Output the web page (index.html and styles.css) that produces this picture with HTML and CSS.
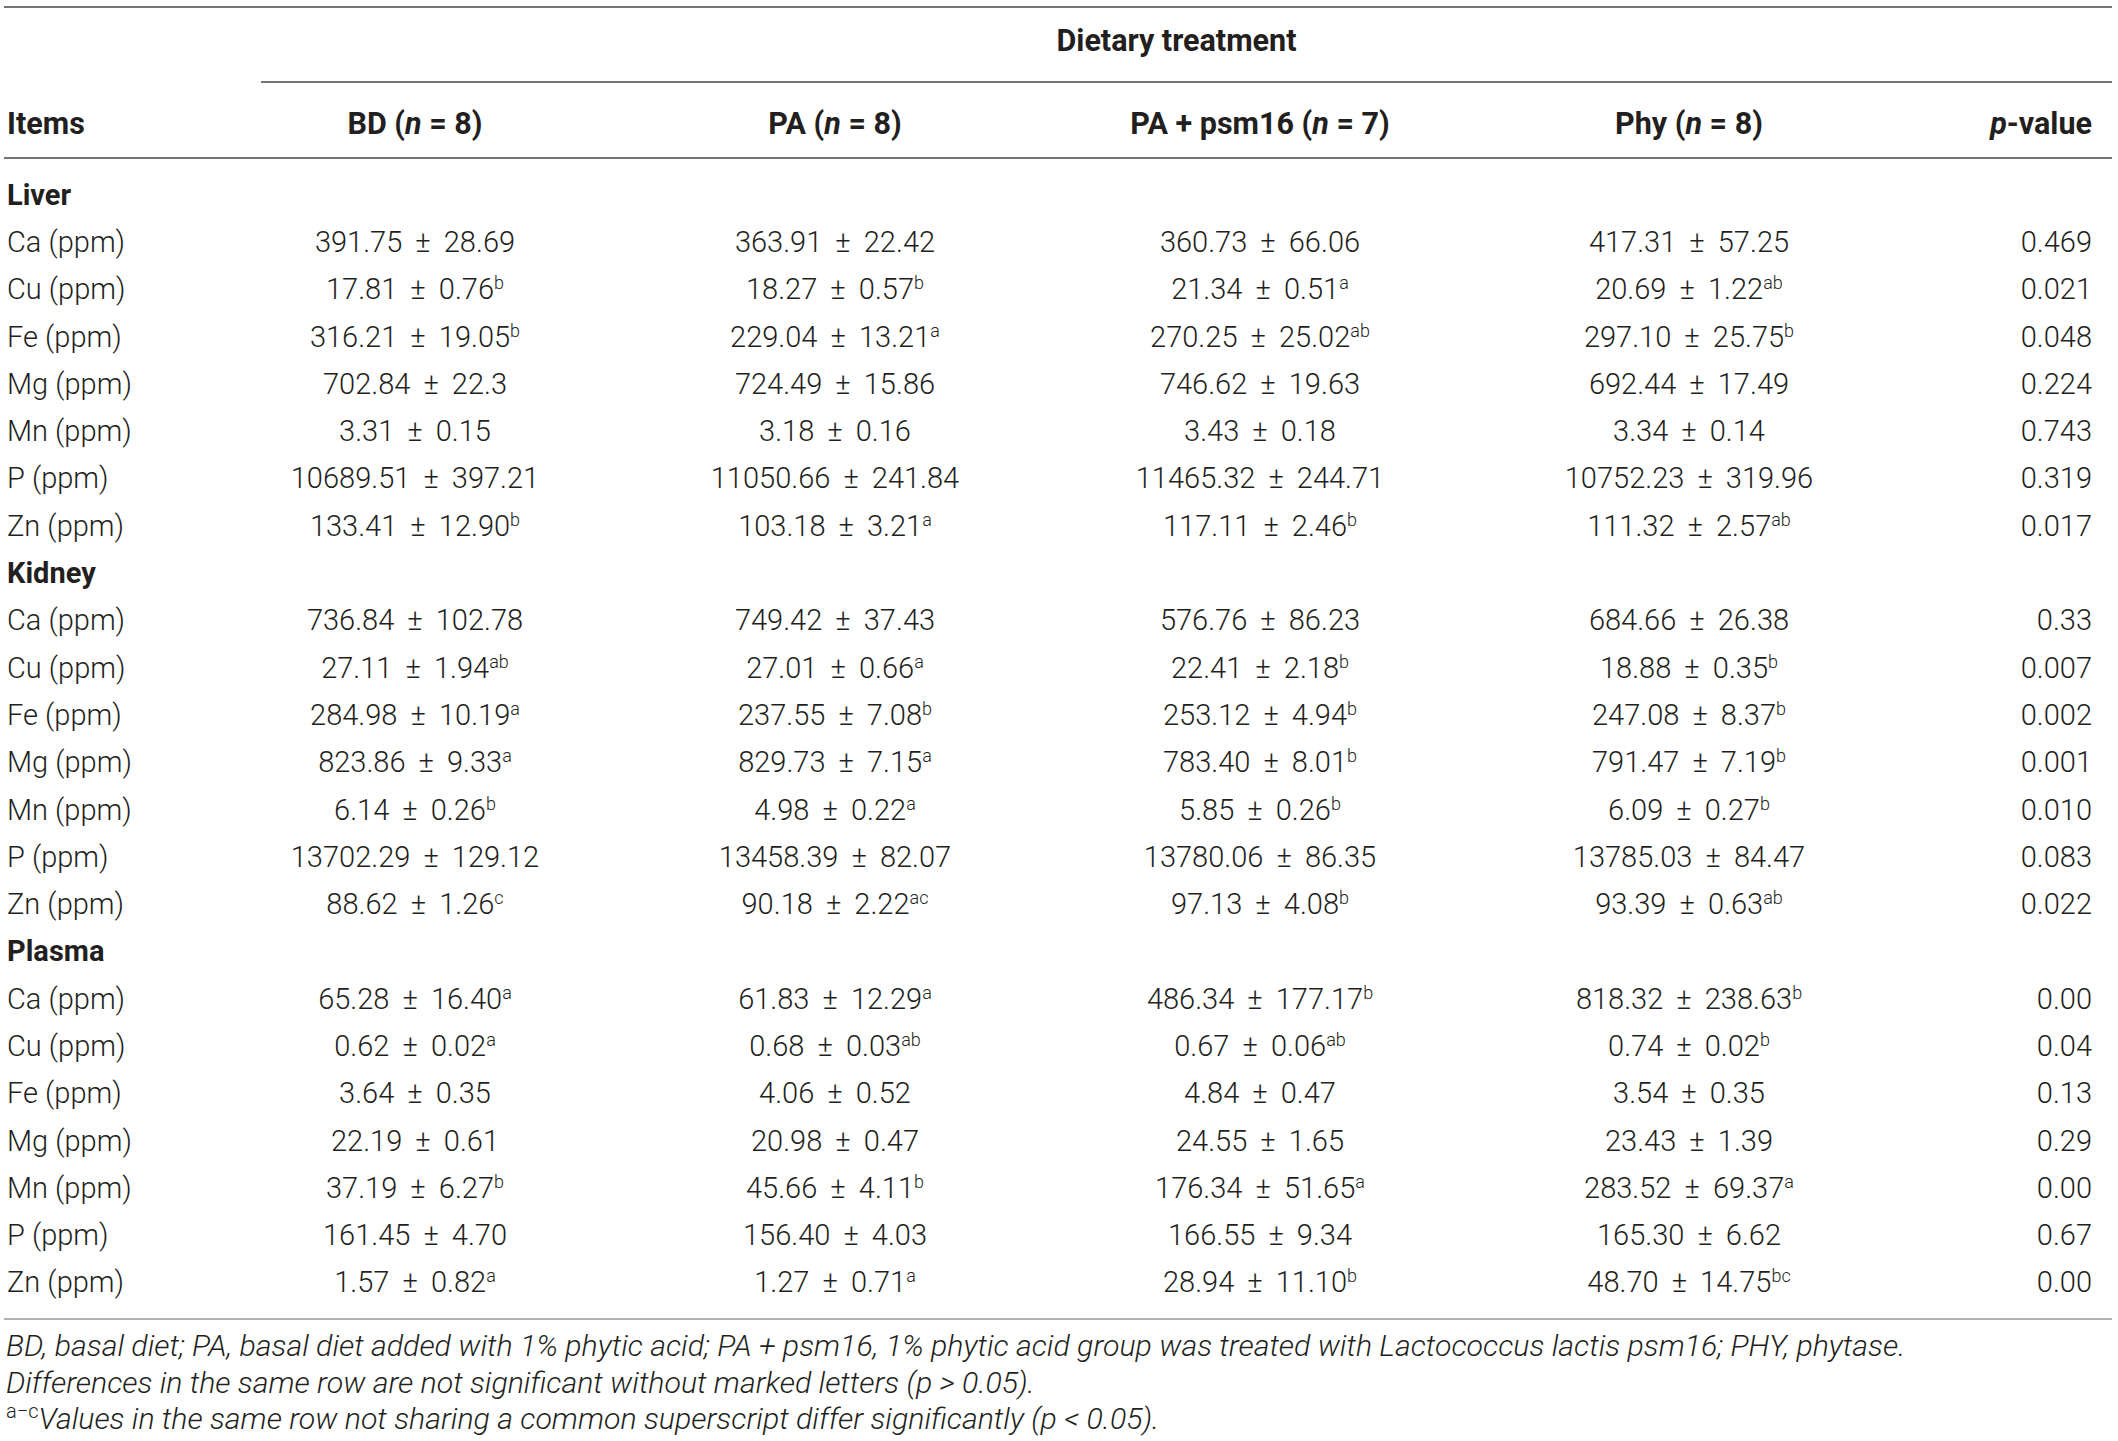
FILE: index.html
```html
<html>
  <head>
    <title>Dietary treatment - mineral content</title>
    <link rel="stylesheet" href="styles.css">
  </head>
  <body>
  <div id="wrapper">
    <div class="tbl">
      <div class="row head-top">
        <div></div>
        <div class="group">Dietary treatment</div>
      </div>
      <div class="row head-cols">
        <div class="left">Items</div>
        <div>BD (<i>n</i> = 8)</div>
        <div>PA (<i>n</i> = 8)</div>
        <div>PA + psm16 (<i>n</i> = 7)</div>
        <div>Phy (<i>n</i> = 8)</div>
        <div class="right"><i>p</i>-value</div>
      </div>
      <div class="body">
        <div class="row section"><div class="label">Liver</div></div>
        <div class="row"><div>Ca (ppm)</div><div>391.75 ± 28.69</div><div>363.91 ± 22.42</div><div>360.73 ± 66.06</div><div>417.31 ± 57.25</div><div>0.469</div></div>
        <div class="row"><div>Cu (ppm)</div><div>17.81 ± 0.76<sup>b</sup></div><div>18.27 ± 0.57<sup>b</sup></div><div>21.34 ± 0.51<sup>a</sup></div><div>20.69 ± 1.22<sup>ab</sup></div><div>0.021</div></div>
        <div class="row"><div>Fe (ppm)</div><div>316.21 ± 19.05<sup>b</sup></div><div>229.04 ± 13.21<sup>a</sup></div><div>270.25 ± 25.02<sup>ab</sup></div><div>297.10 ± 25.75<sup>b</sup></div><div>0.048</div></div>
        <div class="row"><div>Mg (ppm)</div><div>702.84 ± 22.3</div><div>724.49 ± 15.86</div><div>746.62 ± 19.63</div><div>692.44 ± 17.49</div><div>0.224</div></div>
        <div class="row"><div>Mn (ppm)</div><div>3.31 ± 0.15</div><div>3.18 ± 0.16</div><div>3.43 ± 0.18</div><div>3.34 ± 0.14</div><div>0.743</div></div>
        <div class="row"><div>P (ppm)</div><div>10689.51 ± 397.21</div><div>11050.66 ± 241.84</div><div>11465.32 ± 244.71</div><div>10752.23 ± 319.96</div><div>0.319</div></div>
        <div class="row"><div>Zn (ppm)</div><div>133.41 ± 12.90<sup>b</sup></div><div>103.18 ± 3.21<sup>a</sup></div><div>117.11 ± 2.46<sup>b</sup></div><div>111.32 ± 2.57<sup>ab</sup></div><div>0.017</div></div>
        <div class="row section"><div class="label">Kidney</div></div>
        <div class="row"><div>Ca (ppm)</div><div>736.84 ± 102.78</div><div>749.42 ± 37.43</div><div>576.76 ± 86.23</div><div>684.66 ± 26.38</div><div>0.33</div></div>
        <div class="row"><div>Cu (ppm)</div><div>27.11 ± 1.94<sup>ab</sup></div><div>27.01 ± 0.66<sup>a</sup></div><div>22.41 ± 2.18<sup>b</sup></div><div>18.88 ± 0.35<sup>b</sup></div><div>0.007</div></div>
        <div class="row"><div>Fe (ppm)</div><div>284.98 ± 10.19<sup>a</sup></div><div>237.55 ± 7.08<sup>b</sup></div><div>253.12 ± 4.94<sup>b</sup></div><div>247.08 ± 8.37<sup>b</sup></div><div>0.002</div></div>
        <div class="row"><div>Mg (ppm)</div><div>823.86 ± 9.33<sup>a</sup></div><div>829.73 ± 7.15<sup>a</sup></div><div>783.40 ± 8.01<sup>b</sup></div><div>791.47 ± 7.19<sup>b</sup></div><div>0.001</div></div>
        <div class="row"><div>Mn (ppm)</div><div>6.14 ± 0.26<sup>b</sup></div><div>4.98 ± 0.22<sup>a</sup></div><div>5.85 ± 0.26<sup>b</sup></div><div>6.09 ± 0.27<sup>b</sup></div><div>0.010</div></div>
        <div class="row"><div>P (ppm)</div><div>13702.29 ± 129.12</div><div>13458.39 ± 82.07</div><div>13780.06 ± 86.35</div><div>13785.03 ± 84.47</div><div>0.083</div></div>
        <div class="row"><div>Zn (ppm)</div><div>88.62 ± 1.26<sup>c</sup></div><div>90.18 ± 2.22<sup>ac</sup></div><div>97.13 ± 4.08<sup>b</sup></div><div>93.39 ± 0.63<sup>ab</sup></div><div>0.022</div></div>
        <div class="row section"><div class="label">Plasma</div></div>
        <div class="row"><div>Ca (ppm)</div><div>65.28 ± 16.40<sup>a</sup></div><div>61.83 ± 12.29<sup>a</sup></div><div>486.34 ± 177.17<sup>b</sup></div><div>818.32 ± 238.63<sup>b</sup></div><div>0.00</div></div>
        <div class="row"><div>Cu (ppm)</div><div>0.62 ± 0.02<sup>a</sup></div><div>0.68 ± 0.03<sup>ab</sup></div><div>0.67 ± 0.06<sup>ab</sup></div><div>0.74 ± 0.02<sup>b</sup></div><div>0.04</div></div>
        <div class="row"><div>Fe (ppm)</div><div>3.64 ± 0.35</div><div>4.06 ± 0.52</div><div>4.84 ± 0.47</div><div>3.54 ± 0.35</div><div>0.13</div></div>
        <div class="row"><div>Mg (ppm)</div><div>22.19 ± 0.61</div><div>20.98 ± 0.47</div><div>24.55 ± 1.65</div><div>23.43 ± 1.39</div><div>0.29</div></div>
        <div class="row"><div>Mn (ppm)</div><div>37.19 ± 6.27<sup>b</sup></div><div>45.66 ± 4.11<sup>b</sup></div><div>176.34 ± 51.65<sup>a</sup></div><div>283.52 ± 69.37<sup>a</sup></div><div>0.00</div></div>
        <div class="row"><div>P (ppm)</div><div>161.45 ± 4.70</div><div>156.40 ± 4.03</div><div>166.55 ± 9.34</div><div>165.30 ± 6.62</div><div>0.67</div></div>
        <div class="row"><div>Zn (ppm)</div><div>1.57 ± 0.82<sup>a</sup></div><div>1.27 ± 0.71<sup>a</sup></div><div>28.94 ± 11.10<sup>b</sup></div><div>48.70 ± 14.75<sup>bc</sup></div><div>0.00</div></div>
      </div>
    </div>
    <div class="notes">
      <p>BD, basal diet; PA, basal diet added with 1% phytic acid; PA + psm16, 1% phytic acid group was treated with Lactococcus lactis psm16; PHY, phytase.</p>
      <p>Differences in the same row are not significant without marked letters (p &gt; 0.05).</p>
      <p><sup class="up">a−c</sup>Values in the same row not sharing a common superscript differ significantly (p &lt; 0.05).</p>
    </div>
  </div>
  </body>
</html>
```

FILE: styles.css
```css
body { margin: 0px; background: #fff; color: #231f20; font-family: Roboto, "Liberation Sans", Arial, sans-serif; font-weight: 300; }
sup { font-size: 18px; line-height: 0; vertical-align: 10px; }
p { margin: 0px; }

#wrapper { width: 2108px; padding-left: 4px; padding-top: 6px; }

.tbl { width: 2108px; font-size: 29px; border-top: 2px solid #747474; border-bottom: 2px solid #b3b3b3; }
.row { display: grid; grid-template-columns: 257px 308px 532px 318px 540px 153px; align-items: center; height: 47.3px; white-space: nowrap; }
.row > div { text-align: center; word-spacing: 6px; }
.row > div:first-child { text-align: left; padding-left: 3px; word-spacing: 0px; }
.row > div:last-child { text-align: right; padding-right: 20px; }

.head-top { height: 75px; align-items: stretch; font-weight: 700; font-size: 30.5px; }
.head-top .group { grid-column: 2 / 7; display: flex; align-items: center; justify-content: center; padding-bottom: 9px; padding-right: 0px; word-spacing: 0px; border-bottom: 2px solid #747474; }
.head-cols { box-sizing: border-box; height: 76px; padding-top: 6px; font-weight: 700; font-size: 30.5px; border-bottom: 2px solid #747474; }
.head-cols > div { word-spacing: 0px; }
.head-cols i { font-weight: 700; }
.head-cols .right { padding-right: 25px; }

.body { padding: 12px 0px; }
.section { font-weight: 700; }
.section > div.label { grid-column: 1 / 7; text-align: left; padding-left: 3px; padding-right: 0px; }

.notes { font-size: 30.3px; font-style: italic; line-height: 36.5px; padding-top: 8px; padding-left: 2px; }
.notes sup.up { font-style: normal; font-size: 20px; vertical-align: 11px; }
```
